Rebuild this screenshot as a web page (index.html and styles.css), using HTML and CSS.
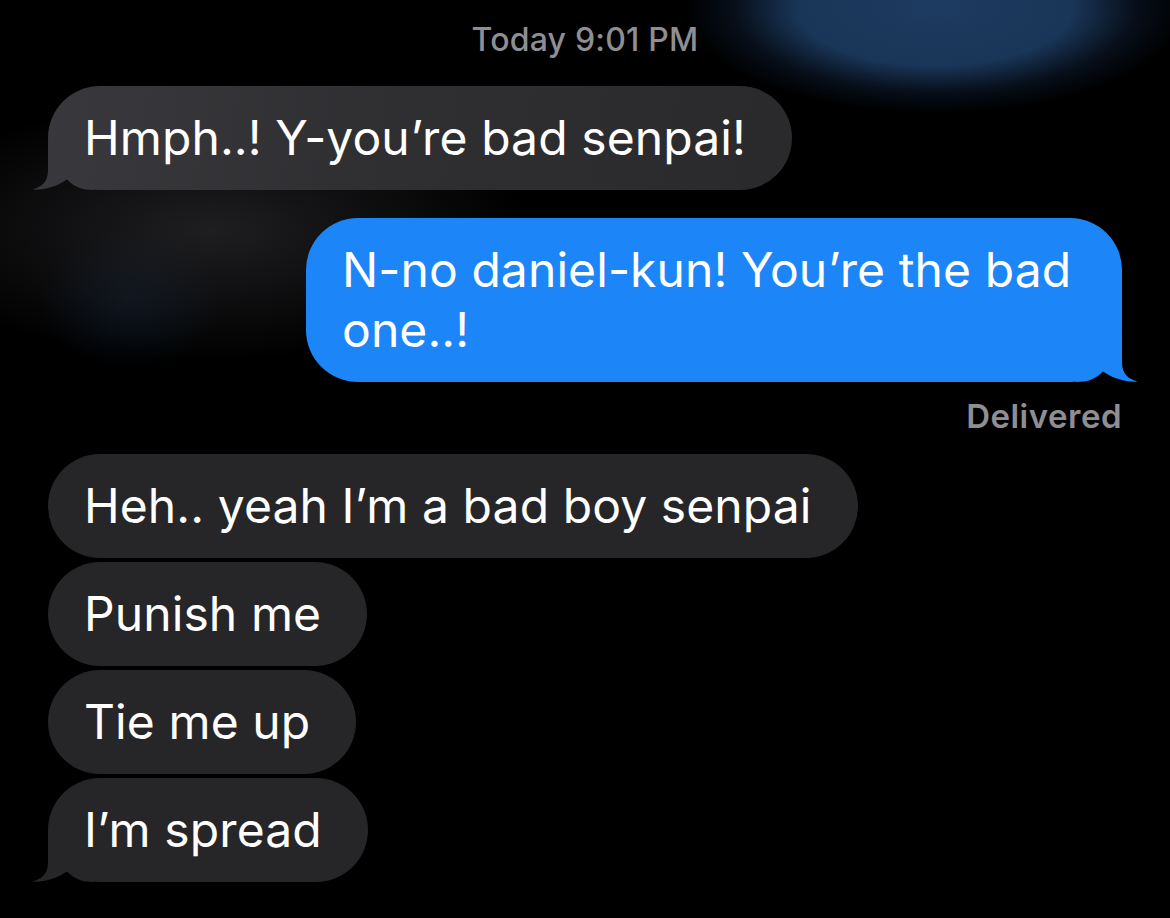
FILE: index.html
```html
<!DOCTYPE html>
<html lang="en">
<head>
<meta charset="utf-8">
<title>Messages</title>
<link rel="stylesheet" href="styles.css">
</head>
<body>
<main class="thread">
  <div class="stamp"><span class="stamp-day">Today</span> 9:01 PM</div>

  <div class="row row-in first">
    <div class="bubble bubble-in bubble-grad">
      <svg class="tail tail-in" viewBox="0 0 60 50" aria-hidden="true"><path d="M16 0 L16 30 C16 42 10 47 0 49.5 C11 50.5 24 47 35 39.5 C42 47 50 50 62 50 L62 0 Z"/></svg>
      <span class="text">Hmph..! Y-you’re bad senpai!</span>
    </div>
  </div>

  <div class="row row-out">
    <div class="bubble bubble-out">
      <svg class="tail tail-out" viewBox="0 0 60 50" aria-hidden="true"><path d="M44 0 L44 30 C44 42 50 47 60 49.5 C49 50.5 36 47 25 39.5 C18 47 10 50 -2 50 L-2 0 Z"/></svg>
      <span class="text">N-no daniel-kun! You’re the bad one..!</span>
    </div>
  </div>
  <div class="status">Delivered</div>

  <div class="group">
    <div class="row row-in"><div class="bubble bubble-in"><span class="text">Heh.. yeah I’m a bad boy senpai</span></div></div>
    <div class="row row-in"><div class="bubble bubble-in"><span class="text">Punish me</span></div></div>
    <div class="row row-in"><div class="bubble bubble-in"><span class="text">Tie me up</span></div></div>
    <div class="row row-in">
      <div class="bubble bubble-in">
        <svg class="tail tail-in" viewBox="0 0 60 50" aria-hidden="true"><path d="M16 0 L16 30 C16 42 10 47 0 49.5 C11 50.5 24 47 35 39.5 C42 47 50 50 62 50 L62 0 Z"/></svg>
        <span class="text">I’m spread</span>
      </div>
    </div>
  </div>
</main>
</body>
</html>
```

FILE: styles.css
```css
* { box-sizing: border-box; }

html, body {
  margin: 0;
  padding: 0;
}

body {
  width: 1170px;
  height: 918px;
  overflow: hidden;
  background-color: #000;
  background-image:
    radial-gradient(ellipse 250px 105px at 935px 8px, rgba(29, 59, 96, 1) 0%, rgba(27, 56, 92, 0.95) 55%, rgba(14, 30, 52, 0.5) 80%, rgba(0, 0, 0, 0) 100%),
    radial-gradient(ellipse 320px 130px at 210px 230px, rgba(38, 38, 42, 0.8), rgba(0, 0, 0, 0) 100%),
    radial-gradient(ellipse 90px 70px at 130px 300px, rgba(10, 26, 44, 0.6), rgba(0, 0, 0, 0) 100%);
  font-family: Inter, "Noto Sans", "Liberation Sans", sans-serif;
  color: #fff;
}

.thread {
  display: flex;
  flex-direction: column;
  padding: 20px 48px 0 48px;
}

.stamp {
  text-align: center;
  font-size: 32px;
  line-height: 40px;
  font-weight: 500;
  color: #8e8e93;
  letter-spacing: 0.2px;
}

.row {
  display: flex;
}

.row-in { justify-content: flex-start; }
.row-out { justify-content: flex-end; }

.row.first { margin-top: 26px; }
.row-out { margin-top: 28px; }

.bubble {
  position: relative;
  isolation: isolate;
  font-size: 48px;
  line-height: 60px;
  letter-spacing: 0.1px;
  padding: 22px 46px 22px 36px;
  border-radius: 52px;
  max-width: 816px;
}

.text {
  position: relative;
  z-index: 1;
}

.bubble-in {
  background-color: #262629;
}

.bubble-grad {
  background-image: linear-gradient(100deg, #39393d 0%, #2f2f32 45%, #2a2a2d 100%);
}

.bubble-out {
  background-color: #1c86f9;
}

.tail {
  position: absolute;
  bottom: 0;
  width: 60px;
  height: 50px;
  overflow: visible;
  z-index: 0;
}

.tail-in {
  left: -16px;
  fill: #262629;
}

.bubble-grad .tail-in { fill: #38383c; }

.tail-out {
  right: -16px;
  fill: #1c86f9;
}

.status {
  align-self: flex-end;
  margin-top: 16px;
  font-size: 33px;
  line-height: 36px;
  font-weight: 600;
  color: #8e8e93;
  letter-spacing: 0.5px;
  margin-right: 0;
}

.group {
  display: flex;
  flex-direction: column;
  gap: 4px;
  margin-top: 20px;
}
```
